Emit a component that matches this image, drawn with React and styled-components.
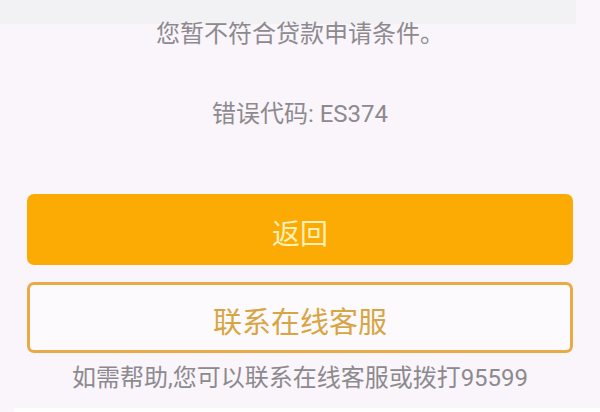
import React from "react";
import styled, { createGlobalStyle } from "styled-components";

const GlobalStyle = createGlobalStyle`
  html, body {
    margin: 0;
    padding: 0;
    background: #f9f5fa;
  }
  body {
    font-family: Roboto, "Noto Sans CJK SC", sans-serif;
  }
`;

const Page = styled.div`
  width: 600px;
  height: 412px;
  display: flex;
  flex-direction: column;
  background: #f9f5fa;
  overflow: hidden;
`;

const TopBar = styled.div`
  height: 24px;
  margin-right: 24px;
  background: #f2f1f3;
`;

const Notice = styled.p`
  margin: ${(p) => p.$top}px 0 0;
  font-size: 24px;
  line-height: 20px;
  text-align: center;
  color: #8d8a8f;
  white-space: nowrap;
`;

const Button = styled.button`
  display: flex;
  align-items: center;
  justify-content: center;
  box-sizing: border-box;
  margin: ${(p) => p.$top}px 27px 0;
  height: 71px;
  padding: 4px 0 0;
  border-radius: 7px;
  font-family: inherit;
  font-size: ${(p) => (p.$outline ? "29px" : "28px")};
  cursor: pointer;
  border: ${(p) => (p.$outline ? "3px solid #e9aa46" : "none")};
  background: ${(p) => (p.$outline ? "#fcfafc" : "#fbab03")};
  color: ${(p) => (p.$outline ? "#d9a443" : "#fdf0b8")};
`;

const BottomStrip = styled.div`
  margin: auto 0 0 14px;
  height: 4px;
  background: #ffffff;
`;

const App = () => {
  return (
    <Page>
      <GlobalStyle />
      <TopBar />
      <Notice $top={0}>您暂不符合贷款申请条件。</Notice>
      <Notice $top={60}>错误代码: ES374</Notice>
      <Button $top={70}>返回</Button>
      <Button $top={17} $outline>
        联系在线客服
      </Button>
      <Notice $top={15}>如需帮助,您可以联系在线客服或拨打95599</Notice>
      <BottomStrip />
    </Page>
  );
};

export default App;
